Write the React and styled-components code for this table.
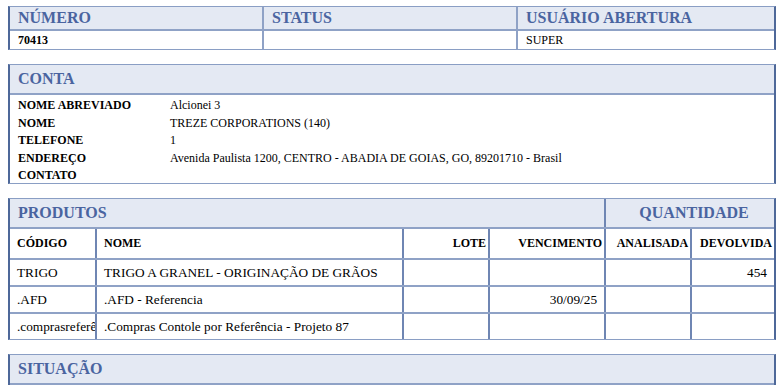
import React from "react";
import styled, { createGlobalStyle } from "styled-components";

const GlobalStyle = createGlobalStyle`
  body {
    margin: 0;
    background: #ffffff;
  }
`;

const serif = `"Liberation Serif", "Times New Roman", serif`;

const Page = styled.div`
  font-family: ${serif};
  color: #000;
  padding: 6px 8px;
  display: flex;
  flex-direction: column;
  gap: 14px;
`;

const Box = styled.div`
  border: 1px solid #8a9ec4;
  border-left: 2px solid #4e6899;
  border-right: 2px solid #4e6899;
`;

const HeaderBar = styled.div`
  background: #e4e9f3;
  color: #4a64a0;
  font-weight: bold;
  font-size: 16px;
  height: ${p => p.h || 30}px;
  display: flex;
  align-items: center;
  padding-left: 8px;
  border-bottom: 2px solid #8fa2c6;
  box-sizing: border-box;
`;

const TopGrid = styled.div`
  display: grid;
  grid-template-columns: 252px 254px 1fr;
`;

const TopCell = styled.div`
  display: flex;
  flex-direction: column;
  & + & {
    border-left: 2px solid #8fa2c6;
  }
`;

const TopValue = styled.div`
  height: 18px;
  display: flex;
  align-items: center;
  padding-left: 8px;
  font-size: 12px;
  font-weight: ${p => (p.bold ? "bold" : "normal")};
`;

const InfoList = styled.div`
  display: grid;
  grid-template-columns: 152px 1fr;
  padding: 2px 8px 0;
  line-height: 17.6px;
  font-size: 12px;
  height: 88px;
  box-sizing: border-box;
`;

const Label = styled.div`
  font-weight: bold;
`;

const Value = styled.div``;

const Table = styled.table`
  width: 100%;
  border-collapse: collapse;
  table-layout: fixed;
  font-family: ${serif};
`;

const GroupHead = styled.th`
  background: #e4e9f3;
  color: #4a64a0;
  font-size: 16px;
  font-weight: bold;
  height: 28px;
  padding: 0 0 0 8px;
  text-align: ${p => p.align || "left"};
  border-bottom: 2px solid #8fa2c6;
  & + & {
    border-left: 2px solid #6f86b3;
  }
`;

const ColHead = styled.th`
  font-size: 12px;
  font-weight: bold;
  height: 29px;
  text-align: ${p => p.align || "left"};
  padding: ${p => (p.align === "right" ? "0 2px 0 0" : "0 0 0 7px")};
  border-bottom: 2px solid #8fa2c6;
  white-space: nowrap;
  & + & {
    border-left: 2px solid #6f86b3;
  }
`;

const Cell = styled.td`
  font-size: 13.3px;
  height: 25px;
  text-align: ${p => p.align || "left"};
  padding: ${p => (p.align === "right" ? "0 7px 0 0" : "0 0 0 7px")};
  border-bottom: 2px solid #8fa2c6;
  white-space: nowrap;
  overflow: hidden;
  & + & {
    border-left: 2px solid #6f86b3;
  }
  tr:last-child > & {
    border-bottom: none;
  }
`;

const SplitRow = styled.div`
  display: grid;
  grid-template-columns: 228px 1fr;
  height: 20px;
`;

const SplitCell = styled.div`
  & + & {
    border-left: 2px solid #6f86b3;
  }
`;

const top = [
  { title: "NÚMERO", value: "70413", bold: true },
  { title: "STATUS", value: "" },
  { title: "USUÁRIO ABERTURA", value: "SUPER" },
];

const conta = [
  ["NOME ABREVIADO", "Alcionei 3"],
  ["NOME", "TREZE CORPORATIONS (140)"],
  ["TELEFONE", "1"],
  ["ENDEREÇO", "Avenida Paulista 1200, CENTRO - ABADIA DE GOIAS, GO, 89201710 - Brasil"],
  ["CONTATO", ""],
];

const produtos = [
  { cod: "TRIGO", nome: "TRIGO A GRANEL - ORIGINAÇÃO DE GRÃOS", lote: "", venc: "", anal: "", dev: "454" },
  { cod: ".AFD", nome: ".AFD - Referencia", lote: "", venc: "30/09/25", anal: "", dev: "" },
  { cod: ".comprasreferência", nome: ".Compras Contole por Referência - Projeto 87", lote: "", venc: "", anal: "", dev: "" },
];

export default function App() {
  return (
    <>
      <GlobalStyle />
      <Page>
        <Box>
          <TopGrid>
            {top.map(t => (
              <TopCell key={t.title}>
                <HeaderBar h={24}>{t.title}</HeaderBar>
                <TopValue bold={t.bold}>{t.value}</TopValue>
              </TopCell>
            ))}
          </TopGrid>
        </Box>

        <Box>
          <HeaderBar>CONTA</HeaderBar>
          <InfoList>
            {conta.map(([k, v]) => (
              <React.Fragment key={k}>
                <Label>{k}</Label>
                <Value>{v}</Value>
              </React.Fragment>
            ))}
          </InfoList>
        </Box>

        <Box>
          <Table>
            <colgroup>
              <col style={{ width: 86 }} />
              <col style={{ width: 307 }} />
              <col style={{ width: 86 }} />
              <col style={{ width: 116 }} />
              <col style={{ width: 86 }} />
              <col />
            </colgroup>
            <thead>
              <tr>
                <GroupHead colSpan={4}>PRODUTOS</GroupHead>
                <GroupHead colSpan={2} align="center">QUANTIDADE</GroupHead>
              </tr>
              <tr>
                <ColHead>CÓDIGO</ColHead>
                <ColHead>NOME</ColHead>
                <ColHead align="right">LOTE</ColHead>
                <ColHead align="right">VENCIMENTO</ColHead>
                <ColHead align="right">ANALISADA</ColHead>
                <ColHead align="right">DEVOLVIDA</ColHead>
              </tr>
            </thead>
            <tbody>
              {produtos.map(p => (
                <tr key={p.cod}>
                  <Cell>{p.cod}</Cell>
                  <Cell>{p.nome}</Cell>
                  <Cell align="right">{p.lote}</Cell>
                  <Cell align="right">{p.venc}</Cell>
                  <Cell align="right">{p.anal}</Cell>
                  <Cell align="right">{p.dev}</Cell>
                </tr>
              ))}
            </tbody>
          </Table>
        </Box>

        <Box>
          <HeaderBar>SITUAÇÃO</HeaderBar>
          <SplitRow>
            <SplitCell />
            <SplitCell />
          </SplitRow>
        </Box>
      </Page>
    </>
  );
}
